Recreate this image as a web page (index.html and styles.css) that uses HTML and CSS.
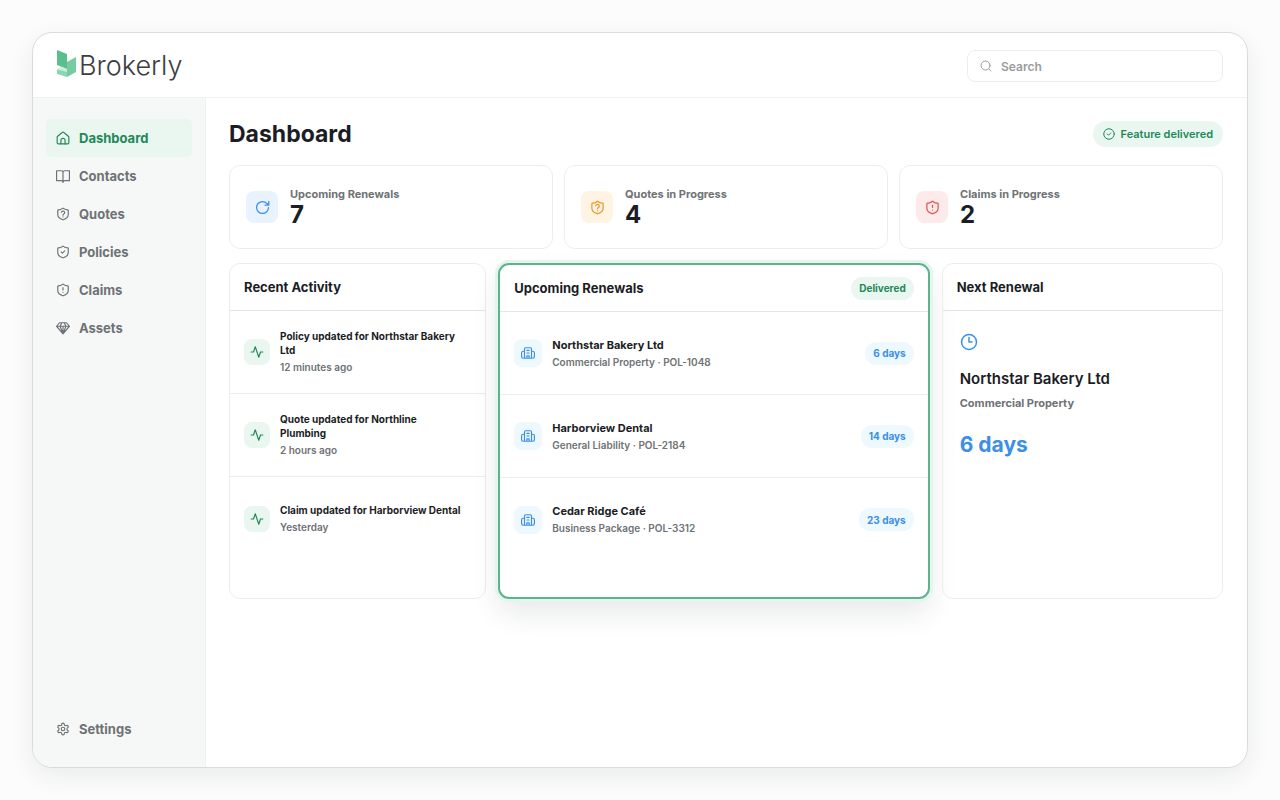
FILE: index.html
```html
<!DOCTYPE html>
<html lang="en">
<head>
	<meta charset="utf-8">
	<title>Brokerly - Dashboard</title>
	<link rel="stylesheet" href="styles.css">
</head>
<body>
	<!-- icons used more than once -->
	<svg class="sprite" aria-hidden="true">
		<symbol id="shield" viewBox="0 0 24 24"><path d="M21 13c0 5-4 7.500-8.660 8.950a1 1 0 0 1-.670-.010C7 20.500 3 18 3 13V6a1 1 0 0 1 1-1c2.500 0 5.500-1.200 7.240-2.720a1.170 1.170 0 0 1 1.520 0C14.510 3.810 17.500 5 20 5a1 1 0 0 1 1 1z"/></symbol>
		<symbol id="shield-question" viewBox="0 0 24 24"><use href="#shield"/><path d="M9.100 9a3 3 0 0 1 5.820 1c0 2-3 2-3 4M12 17h.01"/></symbol>
		<symbol id="shield-alert" viewBox="0 0 24 24"><use href="#shield"/><path d="M12 8v4M12 16h.01"/></symbol>
		<symbol id="activity" viewBox="0 0 24 24"><path d="M2 12h4l3-9 6 18 3-9h4"/></symbol>
		<symbol id="building" viewBox="0 0 24 24"><path d="M6 21V5a2 2 0 0 1 2-2h8a2 2 0 0 1 2 2v16M6 9H4a3 3 0 0 0-3 3v6a3 3 0 0 0 3 3h16a3 3 0 0 0 3-3v-6a3 3 0 0 0-3-3h-2M10 7.500h4M10 12h4M10 21v-4h4v4"/></symbol>
	</svg>
	<div class="window">
		<header class="topbar">
			<a class="logo" href="#">
				<svg class="logo-mark" viewBox="0 0 20 28">
					<path fill="#5abf8d" d="M0 0l10 4v15L0 15z"/>
					<path fill="#76cca2" d="M10 12l9-5v15l-9 5z"/>
					<path fill="#c9efdb" d="M0 18l5-1 5 2v4z"/>
					<path fill="#8ad8b2" d="M0 19l10 3v5L0 24z"/>
				</svg>
				<span>Brokerly</span>
			</a>
			<label class="search">
				<svg class="icon" viewBox="0 0 24 24"><circle cx="11" cy="11" r="9"/><path d="M22 22l-4-4"/></svg>
				<input type="text" placeholder="Search" aria-label="Search">
			</label>
		</header>
		<div class="body">
			<nav class="sidebar">
				<a class="nav-item active" href="#"><svg class="icon" viewBox="0 0 24 24"><path d="M2 10.500a2 2 0 0 1 .8-1.600l7.800-6.400a2 2 0 0 1 2.800 0l7.800 6.400a2 2 0 0 1 .8 1.600V20a2 2 0 0 1-2 2H4a2 2 0 0 1-2-2z"/><path d="M8.500 22v-6a3.500 3.500 0 0 1 7 0v6"/></svg>Dashboard</a>
				<a class="nav-item" href="#"><svg class="icon" viewBox="0 0 24 24"><path d="M12 6a3 3 0 0 0-3-3H1v17h8a3 3 0 0 1 3 3 3 3 0 0 1 3-3h8V3h-8a3 3 0 0 0-3 3zM12 6v16"/></svg>Contacts</a>
				<a class="nav-item" href="#"><svg class="icon"><use href="#shield-question"/></svg>Quotes</a>
				<a class="nav-item" href="#"><svg class="icon" viewBox="0 0 24 24"><use href="#shield"/><path d="M9 12l2 2 4-4"/></svg>Policies</a>
				<a class="nav-item" href="#"><svg class="icon"><use href="#shield-alert"/></svg>Claims</a>
				<a class="nav-item" href="#"><svg class="icon" viewBox="0 0 24 24"><path d="M6 3h12l5 6-11 13L1 9zM1 9h22M12 22L7 9l3-6M12 22l5-13-3-6M12 9v13"/></svg>Assets</a>
				<a class="nav-item settings" href="#"><svg class="icon" viewBox="0 0 24 24"><path d="M12.220 2h-.440a2 2 0 0 0-2 2v.180a2 2 0 0 1-1 1.730l-.430.250a2 2 0 0 1-2 0l-.150-.080a2 2 0 0 0-2.730.730l-.220.380a2 2 0 0 0 .730 2.730l.150.100a2 2 0 0 1 1 1.720v.510a2 2 0 0 1-1 1.740l-.150.090a2 2 0 0 0-.730 2.730l.220.380a2 2 0 0 0 2.730.730l.150-.080a2 2 0 0 1 2 0l.430.250a2 2 0 0 1 1 1.730V20a2 2 0 0 0 2 2h.440a2 2 0 0 0 2-2v-.180a2 2 0 0 1 1-1.730l.430-.250a2 2 0 0 1 2 0l.150.080a2 2 0 0 0 2.730-.730l.220-.390a2 2 0 0 0-.730-2.730l-.150-.080a2 2 0 0 1-1-1.740v-.500a2 2 0 0 1 1-1.740l.150-.090a2 2 0 0 0 .730-2.730l-.220-.380a2 2 0 0 0-2.730-.730l-.150.080a2 2 0 0 1-2 0l-.430-.250a2 2 0 0 1-1-1.730V4a2 2 0 0 0-2-2z"/><circle cx="12" cy="12" r="3"/></svg>Settings</a>
			</nav>
			<main class="main">
				<div class="title-row">
					<h1>Dashboard</h1>
					<span class="feature"><svg class="icon" viewBox="0 0 24 24"><circle cx="12" cy="12" r="10.500"/><path d="M8.500 12l2.500 2.500 4.500-4.500"/></svg>Feature delivered</span>
				</div>
				<section class="stats">
					<div class="stat">
						<span class="tile blue"><svg class="icon" viewBox="0 0 24 24"><path d="M21.500 12a9.500 9.500 0 1 1-9.500-9.500c3 0 5.500 1.200 7.300 3.200L22 8M22 2v6h-6"/></svg></span>
						<div><h2>Upcoming Renewals</h2><p>7</p></div>
					</div>
					<div class="stat">
						<span class="tile orange"><svg class="icon"><use href="#shield-question"/></svg></span>
						<div><h2>Quotes in Progress</h2><p>4</p></div>
					</div>
					<div class="stat">
						<span class="tile red"><svg class="icon"><use href="#shield-alert"/></svg></span>
						<div><h2>Claims in Progress</h2><p>2</p></div>
					</div>
				</section>
				<section class="panels">
					<div class="panel activity">
						<div class="panel-head"><h2>Recent Activity</h2></div>
						<ul>
							<li><span class="tile green"><svg class="icon"><use href="#activity"/></svg></span><div><h3>Policy updated for Northstar Bakery Ltd</h3><p>12 minutes ago</p></div></li>
							<li><span class="tile green"><svg class="icon"><use href="#activity"/></svg></span><div><h3>Quote updated for Northline Plumbing</h3><p>2 hours ago</p></div></li>
							<li><span class="tile green"><svg class="icon"><use href="#activity"/></svg></span><div><h3>Claim updated for Harborview Dental</h3><p>Yesterday</p></div></li>
						</ul>
					</div>
					<div class="panel renewals">
						<div class="panel-head"><h2>Upcoming Renewals</h2><span class="pill delivered">Delivered</span></div>
						<ul>
							<li><span class="tile sky"><svg class="icon"><use href="#building"/></svg></span><div><h3>Northstar Bakery Ltd</h3><p>Commercial Property · POL-1048</p></div><span class="pill days">6 days</span></li>
							<li><span class="tile sky"><svg class="icon"><use href="#building"/></svg></span><div><h3>Harborview Dental</h3><p>General Liability · POL-2184</p></div><span class="pill days">14 days</span></li>
							<li><span class="tile sky"><svg class="icon"><use href="#building"/></svg></span><div><h3>Cedar Ridge Café</h3><p>Business Package · POL-3312</p></div><span class="pill days">23 days</span></li>
						</ul>
					</div>
					<div class="panel next">
						<div class="panel-head"><h2>Next Renewal</h2></div>
						<div class="next-body">
							<svg class="icon" viewBox="0 0 24 24"><circle cx="12" cy="12" r="10"/><path d="M12 6v6h4"/></svg>
							<h3>Northstar Bakery Ltd</h3>
							<p>Commercial Property</p>
							<strong>6 days</strong>
						</div>
					</div>
				</section>
			</main>
		</div>
	</div>
</body>
</html>
```

FILE: styles.css
```css
*{
	box-sizing:border-box;
}
body{
	margin:0;
	padding:32px;
	min-height:100vh;
	display:flex;
	background:#fcfcfc;
	color:#1b1d25;
	font-family:Inter, "Liberation Sans", sans-serif;
	font-weight:700;
}
h1, h2, h3, p, ul{
	margin:0;
	padding:0;
	font-weight:700;
}
ul{
	list-style:none;
}
a{
	color:inherit;
	text-decoration:none;
}
.sprite{
	position:absolute;
	width:0;
	height:0;
}
.icon{
	width:14px;
	height:14px;
	flex:none;
	fill:none;
	stroke:currentColor;
	stroke-width:2;
	stroke-linecap:round;
	stroke-linejoin:round;
}
.window{
	flex:1;
	display:flex;
	flex-direction:column;
	overflow:hidden;
	background:#fff;
	border:1px solid #d9dcdb;
	border-radius:20px;
	box-shadow:0 8px 24px rgba(20,40,32,0.08);
}

/* top bar */
.topbar{
	display:flex;
	align-items:center;
	justify-content:space-between;
	height:65px;
	padding:2px 24px 0;
	border-bottom:1px solid #eff1f1;
}
.logo{
	display:flex;
	align-items:flex-start;
	gap:2px;
	color:#3c3d42;
	font-size:27px;
	font-weight:300;
	line-height:32px;
}
.logo-mark{
	width:20px;
	height:28px;
}
.search{
	display:flex;
	align-items:center;
	gap:9px;
	width:256px;
	height:32px;
	padding:0 12px;
	border:1px solid #eceeee;
	border-radius:8px;
	color:#9a9ca0;
}
.search .icon{
	width:12px;
	height:12px;
}
.search input{
	flex:1;
	min-width:0;
	padding:0;
	border:0;
	outline:0;
	background:none;
	color:#1b1d25;
	font:600 12px Inter, "Liberation Sans", sans-serif;
}
.search input::placeholder{
	color:#9a9ca0;
	opacity:1;
}

/* sidebar */
.body{
	flex:1;
	display:flex;
}
.sidebar{
	display:flex;
	flex-direction:column;
	width:173px;
	padding:21px 13px 19px;
	background:#f6f8f8;
	border-right:1px solid #eff1f1;
}
.nav-item{
	display:flex;
	align-items:center;
	gap:9px;
	height:38px;
	padding:0 10px;
	border-radius:5px;
	color:#6e7275;
	font-size:13px;
}
.nav-item.active{
	background:#e9f7f0;
	color:#24875a;
}
.settings{
	margin-top:auto;
}

/* main */
.main{
	flex:1;
	min-width:0;
	padding:20px 24px 20px 23px;
}
.title-row{
	display:flex;
	align-items:center;
	justify-content:space-between;
	height:32px;
	margin-bottom:15px;
}
h1{
	font-size:23px;
}
.feature{
	display:flex;
	align-items:center;
	gap:6px;
	height:26px;
	padding:0 10px;
	border-radius:13px;
	background:#e9f7f0;
	color:#24875a;
	font-size:11px;
	font-weight:600;
}
.feature .icon{
	width:12px;
	height:12px;
}
.stats{
	display:grid;
	grid-template-columns:repeat(3, 1fr);
	gap:11px;
	margin-bottom:14px;
}
.stat{
	display:flex;
	align-items:center;
	gap:12px;
	height:84px;
	padding:0 16px;
	border:1px solid #eceeee;
	border-radius:11px;
}
.stat h2{
	color:#6e7275;
	font-size:11px;
	line-height:16px;
}
.stat p{
	font-size:24px;
	line-height:26px;
}
.tile{
	display:flex;
	align-items:center;
	justify-content:center;
	flex:none;
	width:28px;
	height:28px;
	border-radius:8px;
}
.stat .tile{
	width:32px;
	height:32px;
}
.stat .icon{
	width:15px;
	height:15px;
}
.blue{
	background:#e9f3fe;
	color:#3b8fe8;
}
.orange{
	background:#fff3e4;
	color:#ea9a2c;
}
.red{
	background:#fdeaea;
	color:#e05555;
}
.green{
	background:#e9f7f0;
	color:#24875a;
}
.sky{
	background:#eef8ff;
	color:#3b8fe8;
}

/* panels */
.panels{
	display:grid;
	grid-template-columns:257fr 431fr 281fr;
	gap:12px;
}
.panel{
	min-width:0;
	min-height:336px;
	border:1px solid #eceeee;
	border-radius:11px;
}
.panel-head{
	display:flex;
	align-items:center;
	justify-content:space-between;
	height:47px;
	padding:0 14px;
	border-bottom:1px solid #e4e6e6;
}
.panel-head h2{
	font-size:13px;
}
.panel li{
	display:flex;
	align-items:center;
	gap:10px;
	height:83px;
	padding:0 14px;
	border-bottom:1px solid #eceeee;
}
.panel li:last-child{
	border-bottom:0;
}
.panel li div{
	flex:1;
	min-width:0;
}
.panel li h3{
	font-size:11px;
	line-height:17px;
}
.panel li p{
	color:#6e7275;
	font-size:10px;
	font-weight:600;
	line-height:16px;
}
.activity .tile{
	width:26px;
	height:26px;
}
.panel.activity li{
	padding-right:22px;
}
.panel.activity h3{
	margin-bottom:2px;
	font-size:10px;
	line-height:14px;
}
.renewals{
	border:2px solid #5bb58c;
	box-shadow:0 0 0 3px #e3f5ec, 0 14px 28px rgba(20,40,32,0.1);
}
.pill{
	display:flex;
	align-items:center;
	height:23px;
	padding:0 8px;
	border-radius:12px;
	font-size:10px;
}
.delivered{
	background:#e9f7f0;
	color:#24875a;
}
.days{
	background:#eef8ff;
	color:#3b8fe8;
}
.next-body{
	display:flex;
	flex-direction:column;
	align-items:flex-start;
	padding:22px 17px;
}
.next-body .icon{
	width:18px;
	height:18px;
	color:#3b8fe8;
}
.next-body h3{
	margin-top:18px;
	font-size:15px;
	font-weight:600;
	line-height:20px;
}
.next-body p{
	margin-top:6px;
	color:#6e7275;
	font-size:11px;
	line-height:16px;
}
.next-body strong{
	margin-top:20px;
	color:#3b8fe8;
	font-size:21px;
	font-weight:700;
	line-height:28px;
}
```
